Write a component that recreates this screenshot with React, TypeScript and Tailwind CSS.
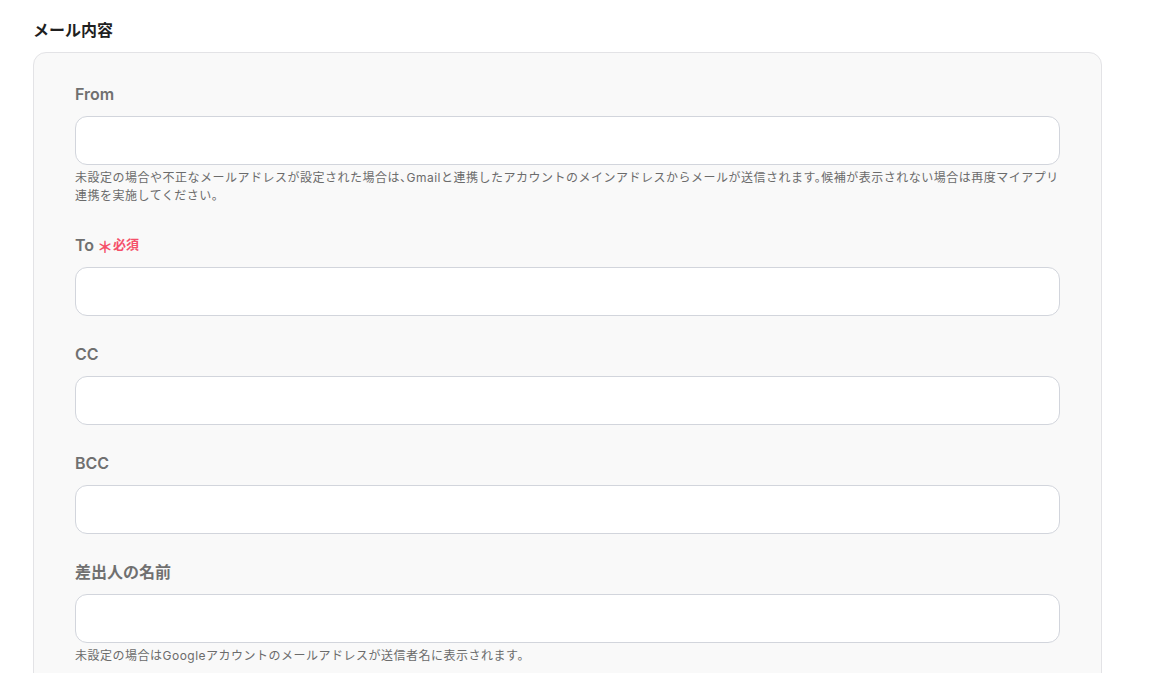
import React from "react";

const font = { fontFamily: 'Inter, "Noto Sans CJK JP", sans-serif' };

function Field({
  label,
  required,
  help,
}: {
  label: string;
  required?: boolean;
  help?: string;
}) {
  return (
    <div className="flex flex-col">
      <div className="flex items-center h-[22px] mb-[11px]">
        <span className="text-[16px] font-semibold text-[#707070]">{label}</span>
        {required && (
          <>
            <span className="ml-[3px] text-[16px] font-bold text-[#f5506a] leading-none mt-[3px]">＊</span>
            <span className="text-[13px] font-bold text-[#f5506a]">必須</span>
          </>
        )}
      </div>
      <div className="h-[49px] w-full rounded-[12px] border border-[#d2d5dc] bg-white" />
      {help && (
        <p className="mt-[4px] mb-[2px] text-[12px] tracking-[0.5px] leading-[18px] text-[#6b6b6b] [font-feature-settings:'halt']">
          {help}
        </p>
      )}
    </div>
  );
}

export default function App() {
  return (
    <div className="w-[1156px] h-[673px] overflow-hidden bg-white" style={font}>
      <div className="pl-[33px] pr-[54px] pt-[19px]">
        <h2 className="text-[16px] font-bold text-[#1f1f1f] leading-[22px] mb-[11px]">メール内容</h2>
        <div className="rounded-[13px] border border-[#e3e3e6] bg-[#f9f9f9] px-[41px] pt-[30px] pb-[40px] flex flex-col gap-[27px]">
          <Field
            label="From"
            help="未設定の場合や不正なメールアドレスが設定された場合は、Gmailと連携したアカウントのメインアドレスからメールが送信されます。候補が表示されない場合は再度マイアプリ連携を実施してください。"
          />
          <Field label="To" required />
          <Field label="CC" />
          <Field label="BCC" />
          <Field
            label="差出人の名前"
            help="未設定の場合はGoogleアカウントのメールアドレスが送信者名に表示されます。"
          />
        </div>
      </div>
    </div>
  );
}
